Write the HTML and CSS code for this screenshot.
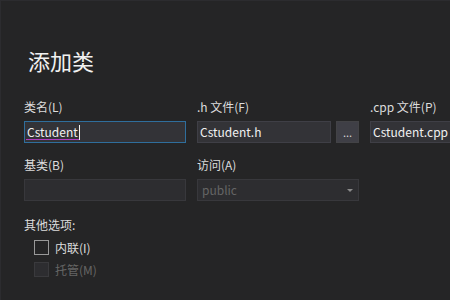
FILE: index.html
```html
<!DOCTYPE html>
<html lang="zh-CN">
<head>
  <meta charset="UTF-8" />
  <title>添加类</title>
  <link rel="stylesheet" href="styles.css">
</head>
<body>
  <div class="dialog">
    <h1 class="title">添加类</h1>

    <div class="row">
      <div class="field field-main">
        <label class="label">类名(L)</label>
        <div class="input focused">
          <span class="typed">Cstudent</span><span class="caret"></span>
        </div>
      </div>
      <div class="field field-main">
        <label class="label">.h 文件(F)</label>
        <div class="combo">
          <div class="input grow">Cstudent.h</div>
          <div class="browse">...</div>
        </div>
      </div>
      <div class="field field-rest">
        <label class="label">.cpp 文件(P)</label>
        <div class="input">Cstudent.cpp</div>
      </div>
    </div>

    <div class="row">
      <div class="field field-main">
        <label class="label">基类(B)</label>
        <div class="input disabled"></div>
      </div>
      <div class="field field-main">
        <label class="label">访问(A)</label>
        <div class="input disabled select">
          <span>public</span>
          <span class="arrow"></span>
        </div>
      </div>
    </div>

    <div class="options">
      <div class="label">其他选项:</div>
      <div class="check">
        <span class="box"></span>
        <span>内联(I)</span>
      </div>
      <div class="check off">
        <span class="box"></span>
        <span>托管(M)</span>
      </div>
    </div>
  </div>
</body>
</html>
```

FILE: styles.css
```css
* {
  box-sizing: border-box;
}

body {
  margin: 0;
  background: #252526;
  font-family: "Noto Sans CJK SC", "Noto Sans", sans-serif;
  color: #dcdcdc;
  width: 450px;
  height: 300px;
  overflow: hidden;
}

.dialog {
  padding: 46px 0 0 23px;
  height: 300px;
  border-left: 1px solid #2c2c2f;
  border-top: 1px solid #2c2c2f;
}

.title {
  margin: 0 0 26px 4px;
  font-size: 22px;
  font-weight: normal;
  line-height: 26px;
  color: #f1f1f1;
}

.row {
  display: flex;
  gap: 11px;
  margin-bottom: 14px;
}

.field {
  display: flex;
  flex-direction: column;
}

.field-main {
  width: 162px;
  flex: none;
}

.field-rest {
  flex: none;
  width: 100px;
}

.label {
  display: block;
  font-size: 12px;
  line-height: 16px;
  height: 16px;
  margin-bottom: 6px;
  color: #dcdcdc;
}

.input {
  height: 22px;
  background: #333337;
  border: 1px solid #3f3f46;
  color: #f1f1f1;
  font-size: 12px;
  line-height: 20px;
  padding: 0 2px;
  display: flex;
  align-items: center;
  white-space: nowrap;
}

.input.focused {
  border-color: #2f6e9c;
  padding-left: 1px;
}

.typed {
  border-bottom: 1px solid #b03cc0;
  line-height: 15px;
  padding: 0 1px;
}

.caret {
  width: 1px;
  height: 15px;
  background: #f1f1f1;
}

.combo {
  display: flex;
  gap: 5px;
}

.grow {
  flex: 1;
}

.browse {
  width: 23px;
  height: 22px;
  background: #3f3f46;
  border: 1px solid #434346;
  color: #d6d6d6;
  font-size: 11px;
  line-height: 20px;
  text-align: center;
}

.input.disabled {
  background: #2d2d30;
  border-color: #38383c;
  color: #656565;
}

.select {
  justify-content: space-between;
  padding-left: 4px;
  padding-right: 5px;
}

.arrow {
  width: 0;
  height: 0;
  border-left: 3px solid transparent;
  border-right: 3px solid transparent;
  border-top: 3px solid #8a8a8a;
}

.options {
  padding-top: 2px;
}

.options .label {
  margin-bottom: 6px;
}

.check {
  display: flex;
  align-items: center;
  gap: 6px;
  margin-left: 10px;
  height: 16px;
  margin-bottom: 6px;
  font-size: 12px;
  color: #dcdcdc;
}

.box {
  width: 15px;
  height: 15px;
  border: 1px solid #999999;
  background: #252526;
}

.check.off {
  color: #656565;
}

.check.off .box {
  border-color: #3a3a3d;
  background: #2d2d30;
}
```
